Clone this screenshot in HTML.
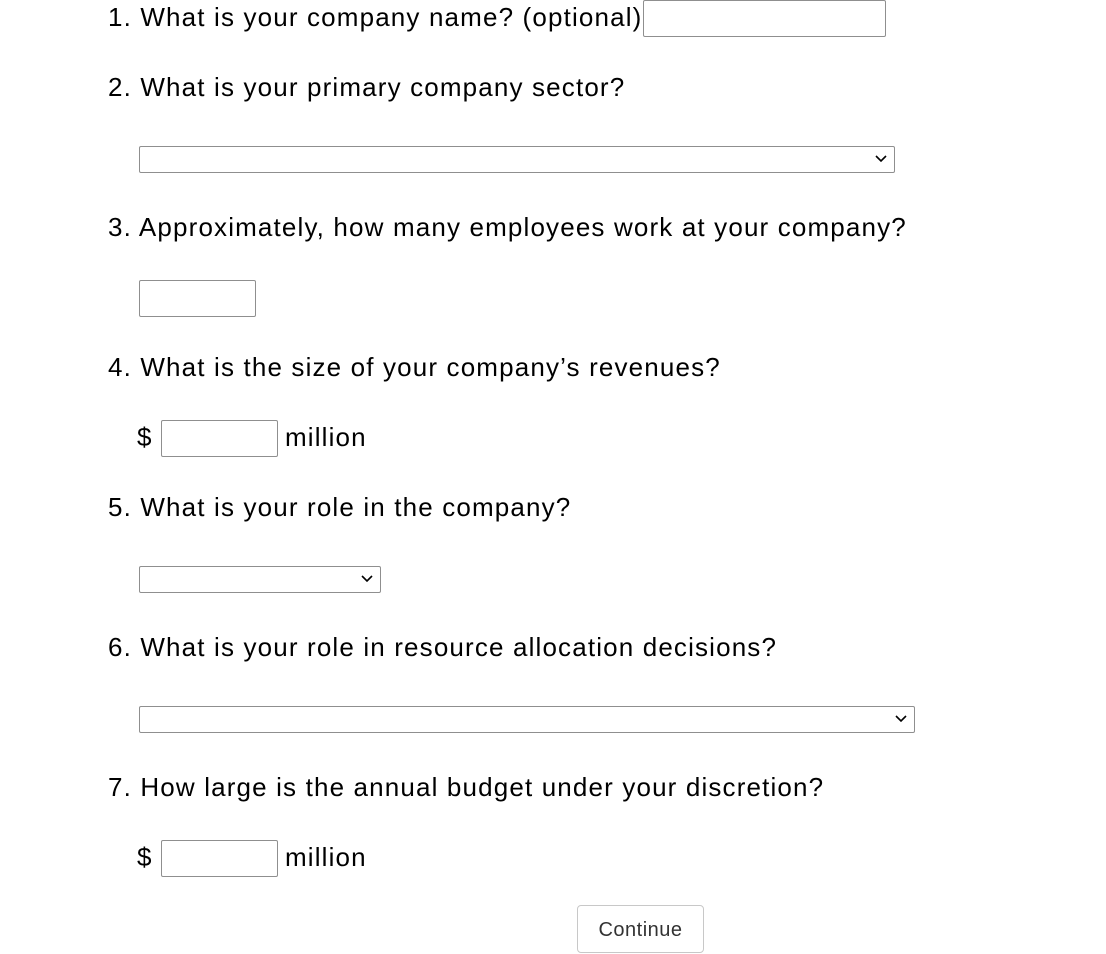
<!DOCTYPE html>
<html><head><style>
body{margin:0;width:1106px;height:954px;background:#fff;font-family:"Liberation Sans",sans-serif;color:#000;position:relative;overflow:hidden}
.t{position:absolute;font-size:26px;line-height:34px;white-space:nowrap;letter-spacing:1.15px}
.in{position:absolute;box-sizing:border-box;border:1px solid #8f8f8f;border-radius:2px;background:#fff}
.sel{position:absolute;box-sizing:border-box;border:1px solid #8f8f8f;border-radius:2px;background:#fff}
.sel svg{position:absolute;right:7px;top:8px}
.btn{position:absolute;left:577px;top:905px;width:127px;height:48px;box-sizing:border-box;border:1px solid #c8c8c8;border-radius:4px;background:#fff;font-size:20px;color:#333;text-align:center;line-height:48px;letter-spacing:0.5px}
</style></head><body>
<div class="t" style="left:108px;top:0px">1. What is your company name? (optional)</div>
<div class="in" style="left:643px;top:0;width:243px;height:37px"></div>
<div class="t" style="left:108px;top:70px">2. What is your primary company sector?</div>
<div class="sel" style="left:139px;top:146px;width:756px;height:27px"><svg width="12" height="8" viewBox="0 0 12 8"><path d="M1 1l5 5 5-5" stroke="#000" stroke-width="1.6" fill="none"/></svg></div>
<div class="t" style="left:108px;top:210px">3. Approximately, how many employees work at your company?</div>
<div class="in" style="left:139px;top:280px;width:117px;height:37px"></div>
<div class="t" style="left:108px;top:350px">4. What is the size of your company’s revenues?</div>
<div class="t" style="left:137px;top:420px">$</div>
<div class="in" style="left:161px;top:420px;width:117px;height:37px"></div>
<div class="t" style="left:285px;top:420px">million</div>
<div class="t" style="left:108px;top:490px">5. What is your role in the company?</div>
<div class="sel" style="left:139px;top:566px;width:242px;height:27px"><svg width="12" height="8" viewBox="0 0 12 8"><path d="M1 1l5 5 5-5" stroke="#000" stroke-width="1.6" fill="none"/></svg></div>
<div class="t" style="left:108px;top:630px">6. What is your role in resource allocation decisions?</div>
<div class="sel" style="left:139px;top:706px;width:776px;height:27px"><svg width="12" height="8" viewBox="0 0 12 8"><path d="M1 1l5 5 5-5" stroke="#000" stroke-width="1.6" fill="none"/></svg></div>
<div class="t" style="left:108px;top:770px">7. How large is the annual budget under your discretion?</div>
<div class="t" style="left:137px;top:840px">$</div>
<div class="in" style="left:161px;top:840px;width:117px;height:37px"></div>
<div class="t" style="left:285px;top:840px">million</div>
<div class="btn">Continue</div>
</body></html>
